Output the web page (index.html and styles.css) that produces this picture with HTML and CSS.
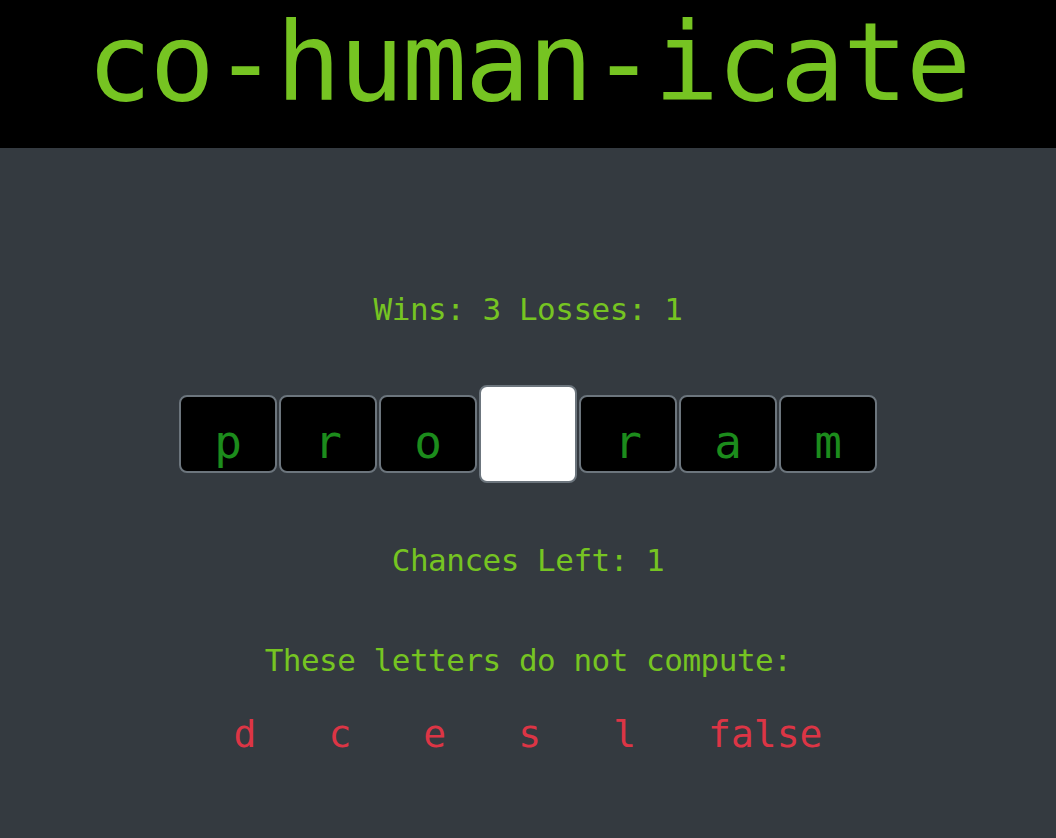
FILE: index.html
```html
<!DOCTYPE html>
<html lang="en">
<head>
<meta charset="utf-8">
<title>co-human-icate</title>
<link rel="stylesheet" href="styles.css">
</head>
<body>
<header class="banner">
  <h1 class="title">co-human-icate</h1>
</header>
<main class="game">
  <p class="score">Wins: 3 Losses: 1</p>
  <div class="word">
    <div class="tile">p</div>
    <div class="tile">r</div>
    <div class="tile">o</div>
    <div class="tile tile-blank"></div>
    <div class="tile">r</div>
    <div class="tile">a</div>
    <div class="tile">m</div>
  </div>
  <p class="chances">Chances Left: 1</p>
  <p class="wrong-label">These letters do not compute:</p>
  <div class="wrong-list">
    <span class="wrong">d</span>
    <span class="wrong">c</span>
    <span class="wrong">e</span>
    <span class="wrong">s</span>
    <span class="wrong">l</span>
    <span class="wrong">false</span>
  </div>
</main>
</body>
</html>
```

FILE: styles.css
```css
html, body {
  margin: 0;
  padding: 0;
}

body {
  background: #343a40;
  font-family: "DejaVu Sans Mono", "Liberation Mono", monospace;
  color: #76c422;
  min-height: 838px;
}

.banner {
  background: #000;
  height: 148px;
}

.title {
  margin: 0;
  text-align: center;
  font-size: 108px;
  line-height: normal;
  font-weight: normal;
  letter-spacing: -2px;
  color: #76c422;
}

.game {
  display: flex;
  flex-direction: column;
  align-items: center;
}

.score,
.chances,
.wrong-label {
  margin: 0;
  font-size: 31px;
  line-height: 1;
  letter-spacing: -0.5px;
}

.score {
  margin-top: 146px;
}

.word {
  display: flex;
  align-items: center;
  margin-top: 60px;
  height: 98px;
}

.tile {
  width: 98px;
  height: 78px;
  margin: 0 1px;
  box-sizing: border-box;
  background: #000;
  border: 2px solid #6c757d;
  border-radius: 8px;
  color: #1c8c1c;
  font-size: 46px;
  line-height: 46px;
  text-align: center;
  padding-top: 22px;
}

.tile-blank {
  height: 98px;
  background: #fff;
}

.chances {
  margin-top: 62px;
}

.wrong-label {
  margin-top: 69px;
}

.wrong-list {
  display: flex;
  gap: 72px;
  margin-top: 39px;
}

.wrong {
  color: #dc3545;
  font-size: 38px;
  line-height: 1;
}
```
